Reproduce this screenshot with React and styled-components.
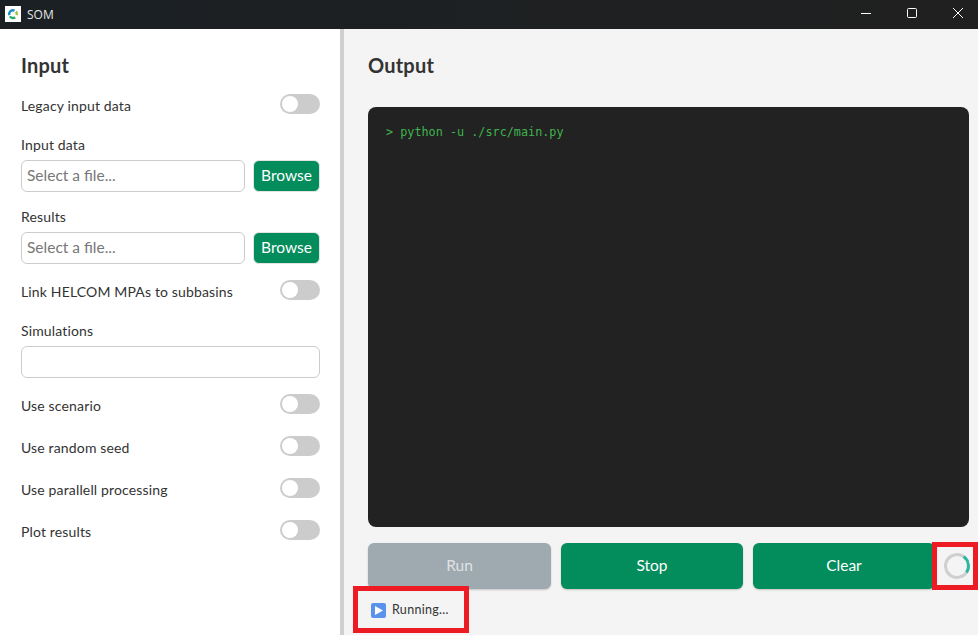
import styled, { createGlobalStyle } from "styled-components";

const GlobalStyle = createGlobalStyle`
  html, body {
    margin: 0;
    height: 100%;
    overflow: hidden;
    font-family: Lato, "Noto Sans", "Liberation Sans", sans-serif;
    color: #333;
  }
  #root {
    height: 100%;
  }
`;

const Page = styled.div`
  display: flex;
  flex-direction: column;
  height: 635px;
  width: 978px;
`;

const TitleBar = styled.div`
  display: flex;
  align-items: center;
  height: 29px;
  flex: none;
  background: linear-gradient(90deg, #1b2024, #202020);
  padding-left: 5px;
`;

const AppIcon = styled.svg`
  width: 16px;
  height: 16px;
  display: block;
  margin-top: -1px;
`;

const AppTitle = styled.span`
  font-family: "Open Sans", sans-serif;
  font-size: 12px;
  color: #e6e6e6;
  margin-left: 6px;
`;

const WindowControls = styled.div`
  display: flex;
  margin-left: auto;
`;

const WindowButton = styled.div`
  width: 46px;
  height: 29px;
  box-sizing: border-box;
  padding-left: 6px;
  display: flex;
  align-items: center;
  justify-content: center;
  margin-top: -3px;
`;

const Body = styled.div`
  display: flex;
  flex: 1;
  min-height: 0;
`;

const Sidebar = styled.aside`
  width: 344px;
  box-sizing: border-box;
  flex: none;
  background: #fff;
  padding: 23px 20px 0 21px;
  border-right: 4px solid #cfcfcf;
`;

const Heading = styled.h2`
  margin: 0 0 ${(p) => p.$gap}px;
  font-size: 20px;
  line-height: 27px;
  font-weight: 700;
  letter-spacing: 0.2px;
  color: #333;
`;

const ToggleRow = styled.div`
  display: flex;
  justify-content: space-between;
  align-items: flex-start;
  height: 20px;
  margin-bottom: ${(p) => p.$gap ?? 22}px;
`;

const RowLabel = styled.span`
  font-size: 14px;
  line-height: 20px;
  padding-top: 2px;
  letter-spacing: 0.15px;
`;

const Toggle = styled.div`
  width: 40px;
  height: 20px;
  border-radius: 10px;
  background: #ccc;
  display: flex;
  align-items: center;
  padding-left: 2px;
  box-sizing: border-box;
  &::before {
    content: "";
    width: 16px;
    height: 16px;
    border-radius: 50%;
    background: #fff;
  }
`;

const FieldLabel = styled.div`
  font-size: 14px;
  line-height: 20px;
  letter-spacing: 0.15px;
  margin-bottom: 5px;
`;

const FileRow = styled.div`
  display: flex;
  gap: 8px;
  align-items: center;
  margin-bottom: ${(p) => p.$gap ?? 15}px;
`;

const TextInput = styled.input`
  flex: 1;
  min-width: 0;
  height: 32px;
  box-sizing: border-box;
  border: 1px solid #ccc;
  border-radius: 6px;
  padding: 0 5px 2px;
  font-family: inherit;
  font-size: 15.5px;
  background: #fff;
  &::placeholder {
    color: #777;
    opacity: 1;
  }
`;

const BrowseButton = styled.button`
  width: 67px;
  height: 32px;
  border: 1px solid #e4e4e4;
  border-radius: 6px;
  background: #038c5c;
  color: #fff;
  font-family: inherit;
  font-size: 15.5px;
  font-weight: 400;
  padding: 0 0 2px;
`;

const Main = styled.main`
  flex: 1;
  min-width: 0;
  position: relative;
  background: #f4f4f4;
  padding: 23px 9px 0 24px;
  display: flex;
  flex-direction: column;
`;

const Terminal = styled.div`
  height: 420px;
  flex: none;
  box-sizing: border-box;
  background: #222;
  border-radius: 8px;
  padding: 17px 18px;
  font-family: "DejaVu Sans Mono", "Liberation Mono", monospace;
  font-size: 11.8px;
  line-height: 16px;
  color: #3fb54f;
`;

const Controls = styled.div`
  display: flex;
  align-items: center;
  gap: 10px;
  margin-top: 16px;
`;

const ActionButton = styled.button`
  flex: none;
  width: 182px;
  height: 46px;
  border: none;
  border-radius: 6px;
  padding: 0 0 2px;
  background: ${(p) => (p.disabled ? "#9fa9b0" : "#038c5c")};
  color: ${(p) => (p.disabled ? "#dfe2e5" : "#fff")};
  font-family: inherit;
  font-size: 15.5px;
  font-weight: 400;
  box-shadow: 0 1px 2px rgba(0, 0, 0, 0.2);
  &:first-child {
    width: 183px;
  }
`;

const Spinner = styled.div`
  flex: none;
  width: 26px;
  height: 26px;
  box-sizing: border-box;
  margin-left: -1px;
  border-radius: 50%;
  border: 3px solid #cfcfcf;
  border-right-color: #2fb5a0;
  transform: rotate(-10deg);
`;

const StatusLine = styled.div`
  display: flex;
  align-items: center;
  gap: 6px;
  margin: 13px 0 0 3px;
  font-size: 12.5px;
  line-height: 16px;
  letter-spacing: 0.3px;
`;

const Highlight = styled.div`
  position: absolute;
  box-sizing: border-box;
  border: 5px solid #ed1c24;
  left: ${(p) => p.$left}px;
  top: ${(p) => p.$top}px;
  width: ${(p) => p.$width}px;
  height: ${(p) => p.$height}px;
`;

const toggleLabels = ["Use scenario", "Use random seed", "Use parallell processing", "Plot results"];

export default function App() {
  return (
    <Page>
      <GlobalStyle />
      <TitleBar>
        <AppIcon viewBox="0 0 16 16">
          <rect width="16" height="16" fill="#fff" />
          <path d="M4.4 9.2a3.8 3.8 0 0 1 5.2-4.6" fill="none" stroke="#1f8fc4" strokeWidth="2.4" />
          <path d="M4.8 10.4a3.8 3.8 0 0 0 5.4 .8" fill="none" stroke="#2aa866" strokeWidth="2.4" />
          <path d="M11 5.6a3.8 3.8 0 0 1 .6 3.6" fill="none" stroke="#9ac53c" strokeWidth="2.4" />
        </AppIcon>
        <AppTitle>SOM</AppTitle>
        <WindowControls>
          <WindowButton>
            <svg width="10" height="10" viewBox="0 0 10 10">
              <path d="M0 5.5h10" stroke="#fff" strokeWidth="1" />
            </svg>
          </WindowButton>
          <WindowButton>
            <svg width="10" height="10" viewBox="0 0 10 10">
              <rect x="0.5" y="0.5" width="9" height="9" rx="1" fill="none" stroke="#fff" strokeWidth="1" />
            </svg>
          </WindowButton>
          <WindowButton>
            <svg width="10" height="10" viewBox="0 0 10 10">
              <path d="M0 0l10 10M10 0L0 10" stroke="#fff" strokeWidth="1" />
            </svg>
          </WindowButton>
        </WindowControls>
      </TitleBar>
      <Body>
        <Sidebar>
          <Heading $gap={15}>Input</Heading>
          <ToggleRow $gap={21}>
            <RowLabel>Legacy input data</RowLabel>
            <Toggle />
          </ToggleRow>
          <FieldLabel>Input data</FieldLabel>
          <FileRow>
            <TextInput placeholder="Select a file..." />
            <BrowseButton>Browse</BrowseButton>
          </FileRow>
          <FieldLabel>Results</FieldLabel>
          <FileRow $gap={16}>
            <TextInput placeholder="Select a file..." />
            <BrowseButton>Browse</BrowseButton>
          </FileRow>
          <ToggleRow $gap={21}>
            <RowLabel>Link HELCOM MPAs to subbasins</RowLabel>
            <Toggle />
          </ToggleRow>
          <FieldLabel>Simulations</FieldLabel>
          <FileRow $gap={16}>
            <TextInput />
          </FileRow>
          {toggleLabels.map((label) => (
            <ToggleRow key={label}>
              <RowLabel>{label}</RowLabel>
              <Toggle />
            </ToggleRow>
          ))}
        </Sidebar>
        <Main>
          <Heading $gap={28}>Output</Heading>
          <Terminal>&gt; python -u ./src/main.py</Terminal>
          <Controls>
            <ActionButton disabled>Run</ActionButton>
            <ActionButton>Stop</ActionButton>
            <ActionButton>Clear</ActionButton>
            <Spinner />
          </Controls>
          <StatusLine>
            <svg width="15" height="15" viewBox="0 0 15 15">
              <rect width="15" height="15" rx="2" fill="#5b93ec" />
              <path d="M4 3l8 4.5L4 12z" fill="#fff" />
            </svg>
            Running...
          </StatusLine>
          <Highlight $left={9} $top={557} $width={116} $height={47} />
          <Highlight $left={588} $top={513} $width={46} $height={48} />
        </Main>
      </Body>
    </Page>
  );
}
